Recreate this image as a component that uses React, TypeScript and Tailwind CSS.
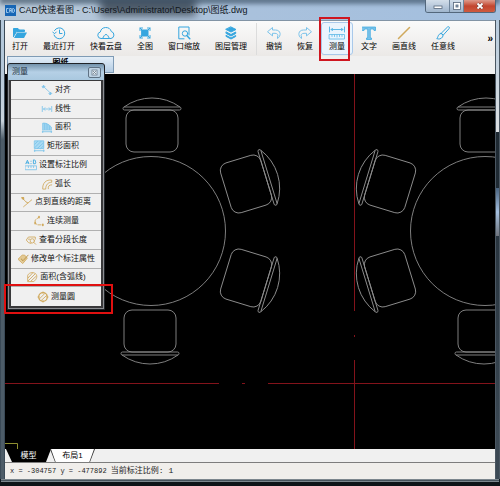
import { useState } from "react";
import type { ReactNode } from "react";

const BLUE = "#35a6df";
const SKY = "#7cc3ea";
const GOLD = "#d0a95c";

function Icon({
  children,
  color,
  size = "md",
}: {
  children: ReactNode;
  color: string;
  size?: "sm" | "md" | "wide";
}) {
  const sizes = {
    sm: "h-3 w-3 shrink-0",
    md: "h-3.5 w-3.5 shrink-0",
    wide: "h-3.5 w-4.5 shrink-0",
  };
  return (
    <svg
      viewBox={size === "wide" ? "0 0 18 14" : "0 0 14 14"}
      className={sizes[size]}
      fill="none"
      stroke={color}
      strokeWidth="1"
      strokeLinecap="round"
      strokeLinejoin="round"
      aria-hidden="true"
    >
      {children}
    </svg>
  );
}

type Tool = { label: string; icon: ReactNode };

const fileTools: Tool[] = [
  {
    label: "打开",
    icon: (
      <Icon color={BLUE}>
        <path d="M0.5 10.500V2.500H5L6.500 4H11.500V5.500H3.500L0.500 10.500Z" fill={BLUE} />
        <path d="M4 6.500H14L11 12H1Z" fill={BLUE} stroke="none" />
      </Icon>
    ),
  },
  {
    label: "最近打开",
    icon: (
      <Icon color={BLUE}>
        <path d="M2.500 4.500A5.500 5.500 0 1 1 2 9" />
        <path d="M0.800 6L2.500 7.800L4.300 6" />
        <path d="M7.500 4V7.500H10" />
      </Icon>
    ),
  },
  {
    label: "快看云盘",
    icon: (
      <Icon color={BLUE} size="wide">
        <path d="M5 12.500H4A3.300 3.300 0 0 1 3.300 6A5.700 5.700 0 0 1 14.300 5.500A3.600 3.600 0 0 1 14 12.500H13" />
        <path d="M5.500 12.500L7.300 9.500A2 2 0 0 1 10.700 9.500L12.500 12.500" />
        <path d="M6 12.500H12" />
      </Icon>
    ),
  },
  {
    label: "全图",
    icon: (
      <Icon color={BLUE}>
        <rect x="4" y="4" width="6" height="6" fill={BLUE} />
        <path d="M2 4.500V2H4.500M9.500 2H12V4.500M12 9.500V12H9.500M4.500 12H2V9.500" />
        <path d="M2 2L4 4M12 2L10 4M12 12L10 10M2 12L4 10" />
      </Icon>
    ),
  },
  {
    label: "窗口缩放",
    icon: (
      <Icon color={BLUE}>
        <path d="M7 12.800H1.800V1H12V9" />
        <circle cx="8" cy="7.500" r="2.700" />
        <path d="M10 9.700L12.800 12.800" strokeWidth="1.500" />
      </Icon>
    ),
  },
  {
    label: "图层管理",
    icon: (
      <Icon color={BLUE}>
        <path d="M7 1L12 3.500L7 6L2 3.500Z" fill={BLUE} />
        <path d="M2.300 6L7 8.500L11.700 6V7.500L7 10L2.300 7.500Z" fill={BLUE} />
        <path d="M2.300 9.500L7 12L11.700 9.500V10.500L7 13L2.300 10.500Z" fill={BLUE} />
      </Icon>
    ),
  },
];

const editTools: Tool[] = [
  {
    label: "撤销",
    icon: (
      <Icon color={SKY}>
        <path d="M0.800 5.500L5.500 1.500V4H8.500C14 4 14.500 10 10.500 12.500V11C11.500 9 10.500 7.300 8 7.300H5.500V9.500Z" />
      </Icon>
    ),
  },
  {
    label: "恢复",
    icon: (
      <Icon color={SKY}>
        <path d="M13.200 5.500L8.500 1.500V4H5.500C0 4 -0.500 10 3.500 12.500V11C2.500 9 3.500 7.300 6 7.300H8.500V9.500Z" />
      </Icon>
    ),
  },
  {
    label: "测量",
    icon: (
      <Icon color="#5cb8e6" size="wide">
        <path d="M1.500 1V6M16.500 1V6M3 3.500H15M4.500 2.500L3 3.500L4.500 4.500M13.500 2.500L15 3.500L13.500 4.500" />
        <path d="M1.500 8.500H16.500V13H1.500ZM4 9V10.500M6.500 9V10.500M9 9V11M11.500 9V10.500M14 9V10.500" strokeWidth="0.800" />
      </Icon>
    ),
  },
  {
    label: "文字",
    icon: (
      <Icon color={BLUE}>
        <path d="M0.500 1H13.500V4.500H12L11.500 3H8.300V12H9.500V13.500H4.500V12H5.700V3H2.500L2 4.500H0.500Z" fill={SKY} strokeWidth="0.700" />
      </Icon>
    ),
  },
  {
    label: "画直线",
    icon: (
      <Icon color={GOLD}>
        <path d="M1.500 12.500L12.500 1.500" strokeWidth="1.500" />
      </Icon>
    ),
  },
  {
    label: "任意线",
    icon: (
      <Icon color={BLUE}>
        <path d="M5.500 7L11.500 1C13 0 14 1.500 13 2.700L7.500 8.800Z" />
        <path d="M5 7.500C7 8 7.500 9.500 6.500 11C5.300 13 2.500 13.500 0.700 12.500C2.500 11.500 1.500 8 5 7.500Z" />
      </Icon>
    ),
  },
];

const measureTools: Tool[] = [
  {
    label: "对齐",
    icon: (
      <Icon color={SKY} size="sm">
        <path d="M4 4L11 10.500" strokeDasharray="2 1" />
        <path d="M1.500 3L3 1.500L4.500 3L3 4.500ZM9.500 11L11 9.500L12.500 11L11 12.500Z" fill={SKY} />
      </Icon>
    ),
  },
  {
    label: "线性",
    icon: (
      <Icon color={SKY} size="sm">
        <path d="M1.500 4V10M12.500 4V10M3 7H11M4.500 5.500L3 7L4.500 8.500M9.500 5.500L11 7L9.500 8.500" />
      </Icon>
    ),
  },
  {
    label: "面积",
    icon: (
      <Icon color={SKY} size="sm">
        <path d="M2 10V2.500C6 2 9 4 12 7V10Z" fill="#a9daf3" />
        <path d="M4 3V10M6 3V10M8 4V10M10 6V10M1.500 12.500H12.500M2 11.500V13.500M12 11.500V13.500" />
      </Icon>
    ),
  },
  {
    label: "矩形面积",
    icon: (
      <Icon color={SKY} size="sm">
        <rect x="2" y="1" width="10.500" height="9" fill="#a9daf3" />
        <path d="M2 5L5.500 1.500M2 9L9.500 1.500M5 10L12 3.500M9 10L12 7M1.500 12.500H13M2 11.500V13.500M12.500 11.500V13.500" />
      </Icon>
    ),
  },
  {
    label: "设置标注比例",
    icon: (
      <Icon color={BLUE} size="sm">
        <path d="M1 5.500L2.800 1.500L4.500 5.500M2 4.500H4M9.800 1.500V5.500H12Q13.500 4.500 12 3.500Q13 2 12 1.500ZM7 2.500V2.700M7 5.300V5.500" />
        <path d="M0.500 8H13.500V12.500H0.500ZM4 8.500V10M7 8.500V10M10 8.500V10" stroke={SKY} />
      </Icon>
    ),
  },
  {
    label: "弧长",
    icon: (
      <Icon color={GOLD} size="sm">
        <path d="M2 12.500C1.500 6 6 1.500 12.500 2.500V5C8 5 5.500 8 5.500 12.500Z" />
        <path d="M8.500 12.500C8 9.500 9.500 8 12.500 8" />
      </Icon>
    ),
  },
  {
    label: "点到直线的距离",
    icon: (
      <Icon color={GOLD} size="sm">
        <path d="M1.500 2.500L3 4L6 7M3 12.500L12.500 4.500M6 7L8 8" />
        <path d="M1 2L3 2L3 4Z" fill={GOLD} strokeWidth="1.500" />
      </Icon>
    ),
  },
  {
    label: "连续测量",
    icon: (
      <Icon color={GOLD} size="sm">
        <path d="M7 2.500L2.500 6V9.500L5.500 11.500H11.500" strokeDasharray="3 1.500" />
        <path d="M7 2V3M2.500 9V10M11.500 11V12" strokeWidth="2" />
      </Icon>
    ),
  },
  {
    label: "查看分段长度",
    icon: (
      <Icon color={GOLD} size="sm">
        <path d="M7 11L4 10L1.500 7L4 3.500H12V6" />
        <circle cx="8.500" cy="8" r="2.500" />
        <path d="M10.500 10L12.500 12M4 6H5.500" />
      </Icon>
    ),
  },
  {
    label: "修改单个标注属性",
    icon: (
      <Icon color={GOLD} size="sm">
        <path d="M1.500 7L6 2.500H9L12 6L7 12Z" fill="#e2c993" />
        <path d="M5 7L7 9L13 2.500" stroke="#b58c3d" />
      </Icon>
    ),
  },
  {
    label: "面积(含弧线)",
    icon: (
      <Icon color={GOLD} size="sm">
        <path d="M2 12V5C4 1 9.500 1 12 4C13.500 7 12 10 9.500 12Z" />
        <path d="M2.500 8L7.500 2.500M2.500 11.500L10.500 3.500M6 11.500L12 6" />
      </Icon>
    ),
  },
  {
    label: "测量圆",
    icon: (
      <Icon color={GOLD} size="sm">
        <circle cx="7" cy="7" r="5" strokeWidth="1.500" />
        <path d="M3 9L9 3M5 11L11.500 5M7 1V2.500M7 11.500V13M1 7H2.500M11.500 7H13" />
      </Icon>
    ),
  },
];

function ToolButton({
  tool,
  active,
  onClick,
}: {
  tool: Tool;
  active: boolean;
  onClick: () => void;
}) {
  return (
    <button
      type="button"
      aria-pressed={active}
      onClick={onClick}
      className={`flex h-[33px] shrink-0 flex-col items-center justify-between rounded-[3px] border px-[6px] pt-[3px] text-[8px] leading-[14px] whitespace-nowrap ${
        active
          ? "border-[#a9c9ea] bg-[#eaf4fd]"
          : "border-transparent hover:bg-[#e8f1f9]"
      }`}
    >
      {tool.icon}
      <span>{tool.label}</span>
    </button>
  );
}

function Chair({ transform }: { transform: string }) {
  return (
    <g transform={transform}>
      <rect x="-26" y="-21" width="52" height="42" rx="8" />
      <rect x="-29" y="-24" width="58" height="3" rx="1.500" />
      <path d="M-28 -24A48 48 0 0 1 28 -24" />
    </g>
  );
}

function Drawing() {
  return (
    <svg
      viewBox="5 74 490 375"
      preserveAspectRatio="xMinYMin slice"
      className="block h-full w-full"
      role="img"
      aria-label="图纸"
    >
      <g stroke="#83131b" strokeWidth="1">
        <path d="M354.500 74V311M354.500 335V337M354.500 360V449" />
        <path d="M5 383.500H219M242 383.500H245M268 383.500H495" />
      </g>
      <g fill="none" stroke="#8c8c8c" strokeWidth="0.900">
        <circle cx="151" cy="231" r="74.500" />
        <Chair transform="translate(152 131)" />
        <Chair transform="translate(150 331) rotate(180)" />
        <Chair transform="translate(246 184) rotate(73)" />
        <Chair transform="translate(246 278) rotate(107)" />
        <circle cx="485" cy="231" r="74.500" />
        <Chair transform="translate(486 131)" />
        <Chair transform="translate(484 331) rotate(180)" />
        <Chair transform="translate(390 184) rotate(-73)" />
        <Chair transform="translate(390 278) rotate(-107)" />
      </g>
      <path d="M5 443.500H17.500V449" fill="none" stroke="#8f8f30" />
    </svg>
  );
}

function TitleBar() {
  return (
    <header className="relative flex h-5 items-center overflow-hidden bg-linear-to-r from-[#b9c9d8] via-[#a9c1dc] to-[#a3bfdf] pr-1 pl-[5px]">
      <div className="absolute -top-1 left-25 h-5 w-24 bg-[#3f4b58] opacity-85 blur-[4px]" />
      <div className="absolute -top-1 left-0 h-2 w-full bg-[#31465a] opacity-60 blur-[2px]" />
      <svg viewBox="0 0 11 11" className="relative h-[11px] w-[11px] shrink-0" aria-hidden="true">
        <rect width="11" height="11" fill="#1766b5" />
        <path
          d="M3.500 3.500H1.500V7.500H3.500M4.700 7.500V3.500H6.300V7.500M4.700 5.500H6.300M7.700 3.500V7.500H8.500L9.500 6.500V4.500L8.500 3.500Z"
          fill="none"
          stroke="#b9dcf7"
          strokeWidth="0.800"
        />
      </svg>
      <h1 className="relative ml-[3px] truncate text-[9px] leading-4 text-[#10161c]">
        CAD快速看图 - C:\Users\Administrator\Desktop\图纸.dwg
      </h1>
      <div className="relative ml-auto flex h-[13px] shrink-0 self-start overflow-hidden rounded-b-[3px] border border-t-0 border-[#53677c] text-[#f7fbff]">
        <button
          type="button"
          aria-label="最小化"
          className="flex w-6 items-center justify-center border-r border-[#6f859b] bg-linear-to-b from-[#d3deea] to-[#9fb5cd]"
        >
          <svg viewBox="0 0 10 8" className="h-2 w-2.5" aria-hidden="true">
            <rect x="1" y="4" width="8" height="2.500" fill="#fff" stroke="#56677a" strokeWidth="0.800" />
          </svg>
        </button>
        <button
          type="button"
          aria-label="最大化"
          className="flex w-[14px] items-center justify-center border-r border-[#6f859b] bg-linear-to-b from-[#d3deea] to-[#9fb5cd]"
        >
          <svg viewBox="0 0 10 8" className="h-2 w-2.5" aria-hidden="true">
            <rect x="1.500" y="0.500" width="7" height="7" fill="#fff" stroke="#56677a" strokeWidth="0.800" />
            <rect x="4" y="3" width="2" height="2" fill="#9fb5cd" stroke="#56677a" strokeWidth="0.800" />
          </svg>
        </button>
        <button
          type="button"
          aria-label="关闭"
          className="flex w-[31px] items-center justify-center bg-linear-to-b from-[#dd9a8c] via-[#c2452f] to-[#cf5a3f]"
        >
          <svg viewBox="0 0 10 8" className="h-2 w-2.5" aria-hidden="true">
            <path d="M2.500 1.500L7.500 6.500M7.500 1.500L2.500 6.500" stroke="#6b3a36" strokeWidth="3" />
            <path d="M2.500 1.500L7.500 6.500M7.500 1.500L2.500 6.500" stroke="#fff" strokeWidth="1.800" />
          </svg>
        </button>
      </div>
    </header>
  );
}

function MeasurePalette({
  selected,
  onSelect,
  onClose,
}: {
  selected: string;
  onSelect: (label: string) => void;
  onClose: () => void;
}) {
  return (
    <section
      aria-label="测量"
      className="absolute top-[63px] left-[7px] z-10 w-[98px] rounded-t-[3px] border border-[#202429] bg-[#39393b]"
    >
      <div className="flex h-4 items-center justify-between rounded-t-[2px] bg-linear-to-b from-[#7393ac] via-[#b5d0e6] to-[#a9c8df] pr-[3px] pl-1">
        <h2 className="text-[8px] leading-4 text-[#23313e]">测量</h2>
        <button
          type="button"
          aria-label="关闭测量"
          onClick={onClose}
          className="flex h-[11px] w-[13px] items-center justify-center rounded-[2px] border border-[#5f7284] bg-[#bfd3e4]"
        >
          <svg viewBox="0 0 7 7" className="h-[7px] w-[7px]" aria-hidden="true">
            <rect x="1" y="1" width="5" height="5" fill="#e6eef5" stroke="#6b7c8c" strokeWidth="0.800" />
            <path d="M2 2L5 5M5 2L2 5" stroke="#6b7c8c" strokeWidth="0.800" />
          </svg>
        </button>
      </div>
      <div className="border-x border-b border-[#8b8d91] px-[2px] pt-px pb-[2px]">
        <div className="grid h-[225px] auto-rows-fr divide-y divide-[#b0b0b0] bg-[#f0f0f0]">
          {measureTools.map((tool) => (
            <button
              key={tool.label}
              type="button"
              aria-pressed={selected === tool.label}
              onClick={() => onSelect(tool.label)}
              className="flex min-h-0 items-center justify-center gap-[2px] overflow-hidden text-[8px] leading-[14px] whitespace-nowrap text-[#111] hover:bg-[#e3eef8]"
            >
              {tool.icon}
              <span>{tool.label}</span>
            </button>
          ))}
        </div>
      </div>
    </section>
  );
}

export default function App() {
  const [activeTool, setActiveTool] = useState("测量");
  const [measure, setMeasure] = useState("测量圆");
  const [paletteOpen, setPaletteOpen] = useState(true);

  const handleTool = (label: string) => {
    setActiveTool(label);
    if (label === "测量") setPaletteOpen(true);
  };

  return (
    <div className="relative flex min-h-screen flex-col overflow-hidden bg-[#10171d] font-['Liberation_Sans','Noto_Sans_CJK_SC',sans-serif] text-black">
      <TitleBar />
      <div className="flex flex-1">
        {/* Glass window edges */}
        <div className="w-[5px] border-x border-[#3b4a57] bg-linear-to-b from-[#b4c8da] from-10% via-[#c9d3dc] via-22% to-[#4d5c68] to-26%" />
        <div className="flex min-w-0 flex-1 flex-col">
          <nav
            aria-label="工具栏"
            className="flex h-9 items-center gap-px overflow-hidden border-t border-[#8294a5] bg-linear-to-b from-[#fafafa] to-[#ebe9e7]"
          >
            {fileTools.map((tool) => (
              <ToolButton
                key={tool.label}
                tool={tool}
                active={activeTool === tool.label}
                onClick={() => handleTool(tool.label)}
              />
            ))}
            <div className="mx-px h-8 w-px shrink-0 bg-[#dcdcdc]" />
            {editTools.map((tool) => (
              <ToolButton
                key={tool.label}
                tool={tool}
                active={activeTool === tool.label}
                onClick={() => handleTool(tool.label)}
              />
            ))}
            <button type="button" aria-label="更多" className="mr-[2px] ml-auto text-[10px] leading-3 font-bold">
              »
            </button>
          </nav>

          <div className="flex h-[18px] items-start bg-[#f0f0f0] pl-[2px]">
            <button
              type="button"
              className="flex h-[17px] w-[107px] items-start justify-center border border-[#7f9bb5] bg-linear-to-b from-[#e3eef8] to-[#b4cce3] text-[8px] leading-3 font-bold"
            >
              图纸
            </button>
          </div>

          <main className="min-h-0 flex-1 basis-[375px] bg-black">
            <Drawing />
          </main>

          <div className="flex h-[14px] border-b border-[#7d7d7d] bg-[#f0f0f0] text-[8px] leading-[14px]">
            <button
              type="button"
              className="ml-px w-[45px] bg-black text-white [clip-path:polygon(0_0,100%_0,calc(100%-5px)_100%,6px_100%)]"
            >
              模型
            </button>
            <button
              type="button"
              className="-ml-px w-[45px] bg-[#333] p-0 [clip-path:polygon(0_0,100%_0,calc(100%-5px)_100%,5px_100%)]"
            >
              <span className="mx-px block bg-white [clip-path:polygon(0_0,100%_0,calc(100%-5px)_100%,5px_100%)]">
                布局1
              </span>
            </button>
          </div>

          <footer className="h-4 bg-[#f0eeeb] pl-[5px] font-['Liberation_Mono','Noto_Sans_CJK_SC',monospace] text-[7px] leading-[15px] whitespace-pre text-[#1c1c1c]">
            x = -304757 y = -477892 <span className="text-[8px]">当前标注比例: 1</span>
          </footer>
        </div>
        <div className="w-[5px] border-x border-[#4a5661] bg-linear-to-b from-[#c3d0db] via-[#26323c] via-40% to-[#3b4853] to-90%">
          <div className="h-28 bg-linear-to-b from-[#b7cbdd] to-[#dcdfe2]" />
          <div className="h-14 bg-[#1f2a33]" />
          <div className="h-12 bg-linear-to-b from-[#4a6480] via-[#a5c0e0] to-[#70757e]" />
        </div>
      </div>
      <div className="mx-px h-[3px] border-y border-[#7c868d] bg-[#46525b]" />
      <div className="h-1 bg-[#0e1418]" />

      {paletteOpen && (
        <MeasurePalette
          selected={measure}
          onSelect={setMeasure}
          onClose={() => setPaletteOpen(false)}
        />
      )}

      {/* Callout frames */}
      <div className="pointer-events-none absolute top-[17px] left-[319px] z-20 h-11 w-[31px] border-2 border-[#cf1620]" />
      <div className="pointer-events-none absolute top-[284px] left-1 z-20 h-[30px] w-[109px] border-2 border-[#e01010]" />
    </div>
  );
}
